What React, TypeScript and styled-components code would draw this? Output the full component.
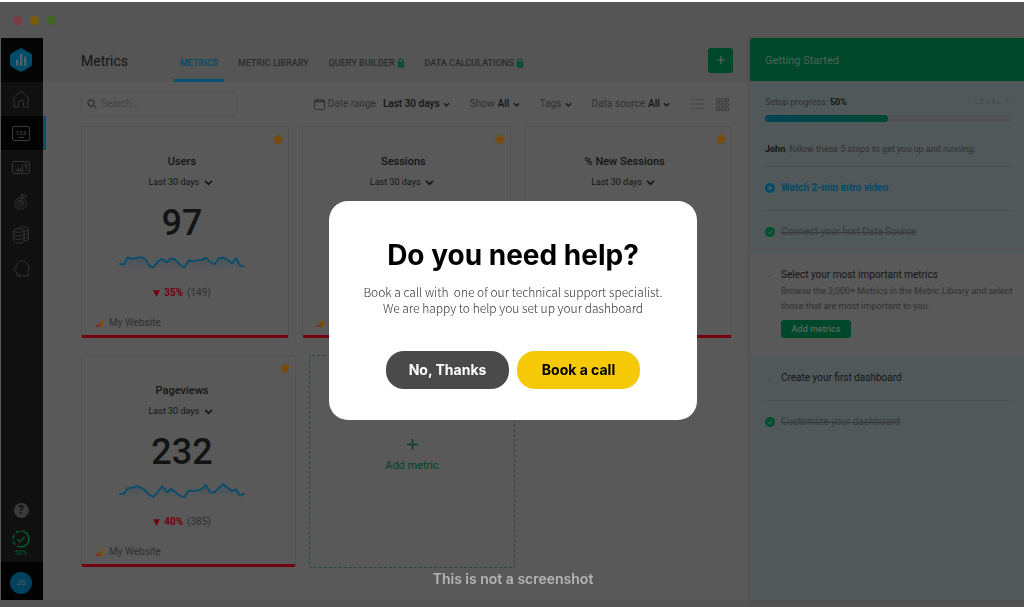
import React from "react";
import styled, { createGlobalStyle, css } from "styled-components";

const c = {
  page: "#595959",
  chrome: "#555555",
  ink: "#141414",
  muted: "#303030",
  faint: "#434343",
  line: "#525252",
  green: "#00482b",
  blue: "#004a6a",
  red: "#74000f",
  amber: "#7a4a00",
  panel: "#51585a",
};

const Global = createGlobalStyle`
  *, *::before, *::after { box-sizing: border-box; }
  html { background: ${c.page}; }
  body { margin: 0; font-family: Roboto, "Liberation Sans", sans-serif; color: ${c.ink}; font-size: 10px; line-height: 14px; }
  button, input, select { font: inherit; color: inherit; margin: 0; padding: 0; border: 0; background: none; }
  button { cursor: pointer; }
  a { color: inherit; text-decoration: none; }
  h1, h2, h3, p, ul, ol { margin: 0; padding: 0; }
  ul, ol { list-style: none; }
  svg { display: block; flex: none; }
`;

const Page = styled.div`
  min-height: 100vh;
  display: flex;
  flex-direction: column;
  border-top: 2px solid #ffffff;
  border-bottom: 7px solid #535353;
`;

const WindowBar = styled.header`
  display: flex;
  align-items: center;
  gap: 8px;
  height: 36px;
  padding-left: 13px;
  background: ${c.chrome};
`;

const Dot = styled.span<{ $color: string }>`
  width: 9px;
  height: 9px;
  border-radius: 50%;
  background: ${(p) => p.$color};
`;

const Shell = styled.div`
  flex: 1;
  display: flex;
  padding-left: 1px;
`;

const Sidebar = styled.nav`
  width: 42px;
  flex: none;
  display: flex;
  flex-direction: column;
  background: #101010;
  color: #343434;
`;

const Logo = styled.a`
  height: 44px;
  padding-right: 2px;
  display: grid;
  place-items: center;
  background: #050505;
`;

const NavLink = styled.a<{ $active?: boolean }>`
  position: relative;
  height: 34px;
  padding-right: 2px;
  display: grid;
  place-items: center;
  ${(p) =>
    p.$active &&
    css`
      background: #030303;
      &::after {
        content: "";
        position: absolute;
        right: -3px;
        top: 0;
        width: 3px;
        height: 100%;
        background: #005272;
      }
    `}
`;

const SideFoot = styled.div`
  margin-top: auto;
  display: flex;
  flex-direction: column;
`;

const SideTools = styled.div`
  display: flex;
  flex-direction: column;
  align-items: center;
  gap: 12px;
  padding: 0 2px 4px 0;
`;

const HelpButton = styled.button`
  width: 15px;
  height: 15px;
  border-radius: 50%;
  background: #3a3a3d;
  color: #101010;
  font-size: 12px;
  font-weight: 700;
  line-height: 15px;
`;

const Setup = styled.a`
  display: flex;
  flex-direction: column;
  align-items: center;
  color: #005734;
  font-size: 7px;
  line-height: 10px;
`;

const Account = styled.div`
  height: 38px;
  padding: 4px 2px 0 0;
  display: grid;
  place-items: center;
  background: #020202;
`;

const Avatar = styled.button`
  width: 22px;
  height: 22px;
  border-radius: 50%;
  background: #00415d;
  color: #4c5c66;
  font-size: 8px;
  font-weight: 500;
`;

const Main = styled.main`
  flex: 1;
  min-width: 0;
  display: flex;
  flex-direction: column;
`;

const MainHeader = styled.div`
  height: 44px;
  display: flex;
  align-items: center;
  padding: 0 17px 0 38px;
  background: ${c.chrome};
`;

const Title = styled.h1`
  width: 93px;
  font-size: 14px;
  line-height: 18px;
  font-weight: 400;
  padding-top: 2px;
`;

const Tabs = styled.div`
  align-self: stretch;
  flex: 1;
  display: flex;
  gap: 8px;
`;

const Tab = styled.a<{ $active?: boolean }>`
  display: flex;
  align-items: center;
  gap: 2px;
  padding: 9px 6px 0;
  border-bottom: 3px solid ${(p) => (p.$active ? "#005272" : "transparent")};
  color: ${(p) => (p.$active ? c.blue : "#2b2b2b")};
  font-size: 9px;
  font-weight: 500;
  white-space: nowrap;
`;

const AddButton = styled.button`
  width: 25px;
  height: 25px;
  display: grid;
  place-items: center;
  border-radius: 3px;
  background: ${c.green};
  color: #5b6b64;
`;

const Toolbar = styled.div`
  display: flex;
  align-items: center;
  gap: 20px;
  padding: 9px 21px 9px 38px;
`;

const Search = styled.label`
  width: 156px;
  height: 26px;
  margin-right: auto;
  display: flex;
  align-items: center;
  gap: 4px;
  padding: 0 5px;
  border: 1px solid ${c.line};
  border-radius: 3px;
  color: #363636;
  input {
    min-width: 0;
    flex: 1;
    outline: 0;
    &::placeholder { color: ${c.faint}; opacity: 1; }
  }
`;

const Filter = styled.label`
  display: flex;
  align-items: center;
  gap: 3px;
  color: ${c.muted};
  white-space: nowrap;
`;

const Picker = styled.select<{ $tone?: "muted"; $gap?: number }>`
  appearance: none;
  margin-left: ${(p) => p.$gap ?? 0}px;
  color: ${(p) => (p.$tone === "muted" ? c.muted : c.ink)};
  font-weight: ${(p) => (p.$tone === "muted" ? 400 : 500)};
`;

const Views = styled.div`
  display: flex;
  align-items: center;
  gap: 12px;
  color: #3b3b3b;
`;

const Board = styled.div`
  padding: 0 18px 32px 38px;
  display: flex;
  flex-direction: column;
  gap: 17px;
`;

const Row = styled.div<{ $columns: string }>`
  display: grid;
  grid-template-columns: ${(p) => p.$columns};
  gap: 13px;
`;

const CardBox = styled.article`
  position: relative;
  display: flex;
  flex-direction: column;
  height: 212px;
  padding-top: 28px;
  border: 1px solid ${c.line};
  border-bottom: 3px solid ${c.red};
  border-radius: 3px;
`;

const Star = styled.button`
  position: absolute;
  top: 6px;
  right: 4px;
  color: ${c.amber};
`;

const CardBody = styled.div`
  width: 100%;
  max-width: 200px;
  display: flex;
  flex-direction: column;
  align-items: center;
`;

const CardTitle = styled.h2`
  font-size: 11px;
  line-height: 14px;
  font-weight: 500;
`;

const Period = styled.label`
  margin-top: 6px;
  display: flex;
  align-items: center;
  gap: 4px;
  font-size: 9px;
  padding-right: 3px;
  select { font-weight: 400; }
`;

const Big = styled.p`
  margin: 14px 0 11px;
  font-size: 36px;
  line-height: 40px;
  font-weight: 500;
`;

const Delta = styled.p`
  margin-top: 16px;
  display: flex;
  align-items: center;
  gap: 4px;
  color: ${c.red};
  font-weight: 700;
  span { color: ${c.muted}; font-weight: 400; }
`;

const Source = styled.p`
  margin-top: auto;
  padding: 0 0 5px 14px;
  min-height: 19px;
  display: flex;
  align-items: center;
  gap: 6px;
  color: ${c.muted};
`;

const AddCard = styled.button`
  height: 213px;
  display: flex;
  flex-direction: column;
  align-items: center;
  justify-content: center;
  gap: 8px;
  padding-bottom: 13px;
  border: 1px dashed #27493a;
  border-radius: 3px;
  color: #004529;
  font-size: 11px;
`;

const Panel = styled.aside`
  width: 274px;
  flex: none;
  background: ${c.panel};
  color: ${c.muted};
  box-shadow: -1px 0 4px rgba(0, 0, 0, 0.12);
  border-top-left-radius: 2px;
`;

const PanelHead = styled.h2`
  height: 43px;
  padding: 3px 15px 0;
  display: flex;
  align-items: center;
  background: ${c.green};
  color: #4d6359;
  font-size: 11px;
  font-weight: 400;
  border-top-left-radius: 2px;
`;

const Progress = styled.div`
  padding: 14px 13px 10px 15px;
  font-size: 9px;
  p { display: flex; justify-content: space-between; }
  b { color: ${c.ink}; }
`;

const Level = styled.span`
  color: #43494a;
  font-size: 8px;
  letter-spacing: 1px;
`;

const Track = styled.div`
  height: 7px;
  margin: 6px 0 20px;
  border-radius: 4px;
  background: #4f5254;
`;

const Fill = styled.div`
  height: 100%;
  border-radius: 4px;
  background: linear-gradient(90deg, #004355, #004832);
`;

const Step = styled.li<{ $open?: boolean }>`
  display: flex;
  gap: 6px;
  margin: 0 13px 0 15px;
  padding: 14px 0 15px;
  border-top: 1px solid #4b5052;
  ${(p) =>
    p.$open &&
    css`
      margin: 0;
      padding: 13px 8px 18px 15px;
      background: ${c.page};
      border-top-color: ${c.page};
      & + li { border-top-color: transparent; }
    `}
`;

const Mark = styled.span`
  width: 10px;
  height: 14px;
  flex: none;
  display: grid;
  place-items: center;
`;

const StepName = styled.h3<{ $state: "link" | "done" | "todo" }>`
  font-size: 10px;
  line-height: 14px;
  font-weight: ${(p) => (p.$state === "link" ? 700 : 400)};
  color: ${(p) => ({ link: c.blue, done: "#363a3b", todo: "#131516" }[p.$state])};
  text-decoration: ${(p) => (p.$state === "done" ? "line-through" : "none")};
`;

const StepText = styled.p`
  margin: 2px 0 6px;
  font-size: 9px;
  line-height: 15px;
`;

const SmallButton = styled.button`
  display: block;
  width: 70px;
  height: 18px;
  border-radius: 3px;
  background: ${c.green};
  color: #57685f;
  font-size: 9px;
  font-weight: 500;
`;

const Overlay = styled.div`
  position: fixed;
  inset: 0;
  display: grid;
  grid-template-rows: 1fr auto 1fr;
  justify-items: center;
  padding: 13px 0 0 2px;
`;

const Dialog = styled.section`
  grid-row: 2;
  width: 368px;
  max-width: 90vw;
  padding: 38px 20px 31px;
  border-radius: 19px;
  background: #ffffff;
  text-align: center;
`;

const DialogTitle = styled.h2`
  color: #000000;
  font-family: Inter, "Open Sans", sans-serif;
  font-size: 28px;
  line-height: 32px;
  font-weight: 700;
`;

const DialogText = styled.p`
  margin: 13px 0 35px;
  color: #333333;
  font-family: "Noto Sans CJK SC", "Noto Sans", sans-serif;
  font-size: 12px;
  line-height: 16px;
  font-weight: 300;
  white-space: pre-wrap;
`;

const Actions = styled.div`
  display: flex;
  justify-content: center;
  gap: 8px;
`;

const Pill = styled.button<{ $primary?: boolean }>`
  width: 123px;
  height: 38px;
  border-radius: 18px;
  background: ${(p) => (p.$primary ? "#f5c907" : "#4a4a4a")};
  color: ${(p) => (p.$primary ? "#000000" : "#ffffff")};
  font-family: Inter, "Open Sans", sans-serif;
  font-size: 14px;
  font-weight: 700;
`;

const Caption = styled.p`
  grid-row: 3;
  align-self: end;
  padding-bottom: 19px;
  color: #b5b5b5;
  font-family: Inter, "Open Sans", sans-serif;
  font-size: 14px;
  line-height: 18px;
  font-weight: 600;
`;

const Chevron = ({ size = 7 }: { size?: number }) => (
  <svg width={size} height={size} viewBox="0 0 8 8" fill="none" stroke={c.ink} strokeWidth="1.5">
    <path d="M1 2.6l3 3 3-3" />
  </svg>
);

const Lock = () => (
  <svg width="8" height="10" viewBox="0 0 8 10">
    <path d="M2 4V2.8a2 2 0 0 1 4 0V4" fill="none" stroke="#005031" strokeWidth="1.2" />
    <rect x="0.8" y="3.8" width="6.4" height="5.6" rx="1" fill="#005031" />
    <circle cx="4" cy="6.5" r="0.8" fill="#35574a" />
  </svg>
);

const Plus = ({ size, width = 1.4 }: { size: number; width?: number }) => (
  <svg width={size} height={size} viewBox="0 0 12 12" stroke="currentColor" strokeWidth={width}>
    <path d="M6 1v10M1 6h10" />
  </svg>
);

const DoneMark = () => (
  <svg width="10" height="10" viewBox="0 0 10 10" fill="none">
    <circle cx="5" cy="5" r="5" fill="#004f30" />
    <path d="M2.8 5.2l1.6 1.6 3-3.4" stroke="#52665d" />
  </svg>
);

const TodoMark = () => (
  <svg width="10" height="10" viewBox="0 0 10 10" fill="none" stroke="#474b4a">
    <path d="M3 5.4l1.6 1.6 3-3.8" />
  </svg>
);

const PlayMark = () => (
  <svg width="10" height="10" viewBox="0 0 10 10">
    <circle cx="5" cy="5" r="5" fill={c.blue} />
    <path d="M3.6 2.4v5.200L7.800 5z" fill={c.panel} />
  </svg>
);

const navIcons: { name: string; active?: boolean; icon: React.ReactNode }[] = [
  {
    name: "Home",
    icon: (
      <svg width="16" height="18" viewBox="0 0 16 18" fill="none" stroke="currentColor">
        <path d="M1 7.5L8 1l7 6.500V17h-4.500v-4.500a2.500 2.500 0 0 0-5 0V17H1z" strokeLinejoin="round" />
      </svg>
    ),
  },
  {
    name: "Metrics",
    active: true,
    icon: (
      <svg width="18" height="15" viewBox="0 0 18 15" fill="none" stroke="#3c3c3c">
        <rect x="0.5" y="0.5" width="17" height="14" rx="1.5" />
        <path d="M6 11.500h6" />
        <text x="9" y="8.500" textAnchor="middle" fontSize="6" fontWeight="700" fill="#3c3c3c" stroke="none">123</text>
      </svg>
    ),
  },
  {
    name: "Dashboards",
    icon: (
      <svg width="18" height="13" viewBox="0 0 18 13" fill="none" stroke="currentColor">
        <rect x="0.5" y="0.5" width="17" height="12" rx="1.500" />
        <path d="M4.500 10V8M6.500 10V6.500M8.500 10V7M10.500 10V3M3.500 10h8M13 7h2.500M13 9.500h2.500" />
        <circle cx="14" cy="4" r="1.500" />
      </svg>
    ),
  },
  {
    name: "Goals",
    icon: (
      <svg width="14" height="17" viewBox="0 0 14 17" fill="none" stroke="currentColor">
        <circle cx="6.500" cy="10.500" r="5.800" />
        <circle cx="6.500" cy="10.500" r="3.300" />
        <circle cx="6.500" cy="10.500" r="1" />
        <path d="M6.500 10.500L8.500 3M8 3.500L7 1l3 1 3 0.500-2 2z" strokeLinejoin="round" />
      </svg>
    ),
  },
  {
    name: "Data sources",
    icon: (
      <svg width="16" height="18" viewBox="0 0 16 18" fill="none" stroke="currentColor">
        <ellipse cx="5.800" cy="4.500" rx="5.200" ry="1.800" />
        <path d="M0.600 4.500v10.700c0 2.400 10.400 2.400 10.400 0V4.500M0.600 8c0 2.400 10.400 2.400 10.400 0M0.600 11.600c0 2.400 10.400 2.400 10.400 0" />
        <path d="M5.500 2.400c1-2.200 10-2.200 10 0v10.700c0 1.200-2 1.800-4.500 1.900M11 5.100c2.500-.1 4.500-.8 4.500-1.800M11 8.500c2.500-.1 4.500-.8 4.500-1.800M11 12c2.500-.1 4.500-.8 4.500-1.800" />
      </svg>
    ),
  },
  {
    name: "Notifications",
    icon: (
      <svg width="17" height="18" viewBox="0 0 17 18" fill="none" stroke="currentColor" strokeLinejoin="round">
        <path d="M0.800 9.500C3 8 3.200 6.500 4 4.500 5.300 1.500 8.500.2 11.500 1.300c3.200 1.300 4.600 4 4.300 7-.2 2.500-1.300 4.500-.3 7.400-3.500-.4-5.500 1-8.500-.2C4.500 14.500 3 11.500 0.800 9.500z" />
        <path d="M3.800 13.500c-.9 1.500.1 3.400 1.700 3.400 1 0 1.600-.5 2-1.300" />
      </svg>
    ),
  },
];

const userTrend =
  "358,251 372,254 384,232 397,237 423,231 436,236 450,259 462,262 475,243 488,237 502,247 514,235 527,239 540,253 554,263 567,241 580,244 593,240 606,240 618,233 631,245 644,254 657,234 670,233 683,238 697,250 709,234 722,258 735,258";
const viewTrend =
  "358,255 372,254 385,237 398,237 411,231 424,236 437,245 450,258 462,264 475,248 488,232 502,250 514,240 527,249 540,260 554,265 567,244 580,246 593,244 606,240 618,228 631,249 644,250 657,237 670,225 683,235 697,247 709,241 722,260 735,253";

const Sparkline = ({ points }: { points: string }) => (
  <svg width="128" height="16" viewBox="355 222 384 48" fill="none">
    <defs>
      <linearGradient id="fade" x1="0" x2="0" y1="0" y2="1">
        <stop offset="0" stopColor="#45535b" />
        <stop offset="1" stopColor="#595959" />
      </linearGradient>
    </defs>
    <path d={`M358,268 L${points} L735,268z`} fill="url(#fade)" />
    <polyline points={points} stroke="#004c6e" strokeWidth="5" strokeLinejoin="round" />
  </svg>
);

type Reading = { value: string; trend: string; change: string; before: string };
type Metric = { title: string; reading?: Reading; source?: string };

const Card = ({ title, reading, source }: Metric) => (
  <CardBox>
    <Star aria-label={`Favourite ${title}`}>
      <svg width="12" height="12" viewBox="0 0 12 12" fill="currentColor">
        <path d="M6 0.300l1.700 3.900 4.100.4-3.100 2.800.9 4.200L6 9.400l-3.600 2.200.9-4.200L.2 4.600l4.100-.4z" />
      </svg>
    </Star>
    <CardBody>
      <CardTitle>{title}</CardTitle>
      <Period>
        <Picker aria-label={`${title} period`}>
          <option>Last 30 days</option>
        </Picker>
        <Chevron size={9} />
      </Period>
      {reading && (
        <>
          <Big>{reading.value}</Big>
          <Sparkline points={reading.trend} />
          <Delta>
            <svg width="7" height="7" viewBox="0 0 7 7" fill="currentColor">
              <path d="M0 0.300h7L3.500 7z" />
            </svg>
            {reading.change} <span>({reading.before})</span>
          </Delta>
        </>
      )}
    </CardBody>
    <Source>
      <svg width="7" height="8" viewBox="0 0 7 8">
        <path d="M0 6h2v2H0z" fill="#74310b" />
        <path d="M2.500 4h2v4h-2z" fill="#7a3d08" />
        <path d="M5 0.500h2V8H5z" fill="#7e5200" />
      </svg>
      {source}
    </Source>
  </CardBox>
);

const topMetrics: Metric[] = [
  {
    title: "Users",
    reading: { value: "97", trend: userTrend, change: "35%", before: "149" },
    source: "My Website",
  },
  { title: "Sessions" },
  { title: "% New Sessions" },
];

const pageviews: Metric = {
  title: "Pageviews",
  reading: { value: "232", trend: viewTrend, change: "40%", before: "385" },
  source: "My Website",
};

export default function App() {
  return (
    <>
      <Global />
      <Page>
        <WindowBar>
          <Dot $color="#7c3a42" />
          <Dot $color="#7a5c0a" />
          <Dot $color="#41661f" />
        </WindowBar>
        <Shell>
          <Sidebar>
            <Logo href="#" aria-label="Start">
              <svg width="22" height="24" viewBox="0 0 22 24">
                <path d="M9.500.700a3 3 0 0 1 3 0l8 4.500A3 3 0 0 1 22 7.700v8.600a3 3 0 0 1-1.500 2.500l-8 4.500a3 3 0 0 1-3 0l-8-4.500A3 3 0 0 1 0 16.300V7.700a3 3 0 0 1 1.500-2.500z" fill="#004d6b" />
                <path d="M7.200 16.800v-4.300M11.200 16.800V6.800M15.200 16.800V9.800" stroke="#50606a" strokeWidth="2.400" strokeLinecap="round" />
              </svg>
            </Logo>
            {navIcons.map((n) => (
              <NavLink key={n.name} href="#" aria-label={n.name} $active={n.active}>
                {n.icon}
              </NavLink>
            ))}
            <SideFoot>
              <SideTools>
                <HelpButton>?</HelpButton>
                <Setup href="#">
                  <svg width="18" height="18" viewBox="0 0 18 18" fill="none" stroke="currentColor" strokeWidth="1.600">
                    <path d="M9 1a8 8 0 0 1 0 16" />
                    <path d="M9 17A8 8 0 0 1 9 1" strokeDasharray="4 2.500" />
                    <path d="M5.500 9.200l2.500 2.500 4.500-4.700" />
                  </svg>
                  50%
                </Setup>
              </SideTools>
              <Account>
                <Avatar>JS</Avatar>
              </Account>
            </SideFoot>
          </Sidebar>

          <Main>
            <MainHeader>
              <Title>Metrics</Title>
              <Tabs>
                <Tab href="#" $active>METRICS</Tab>
                <Tab href="#">METRIC LIBRARY</Tab>
                <Tab href="#">QUERY BUILDER <Lock /></Tab>
                <Tab href="#">DATA CALCULATIONS <Lock /></Tab>
              </Tabs>
              <AddButton aria-label="Add"><Plus size={10} /></AddButton>
            </MainHeader>
            <Toolbar>
              <Search>
                <svg width="10" height="10" viewBox="0 0 10 10" fill="none" stroke="currentColor" strokeWidth="1.400">
                  <circle cx="4" cy="4" r="3" />
                  <path d="M6.200 6.200L9.300 9.300" />
                </svg>
                <input type="text" placeholder="Search..." aria-label="Search" />
              </Search>
              <Filter>
                <svg width="11" height="11" viewBox="0 0 11 11" fill="none" stroke="currentColor">
                  <rect x="0.500" y="1" width="10" height="9.500" rx="1" />
                  <path d="M0.500 2.500h10M3 0v1.500M8 0v1.500" strokeWidth="1.500" />
                </svg>
                Date range
                <Picker $gap={4}><option>Last 30 days</option></Picker>
                <Chevron />
              </Filter>
              <Filter>
                Show
                <Picker><option>All</option></Picker>
                <Chevron />
              </Filter>
              <Filter>
                <Picker $tone="muted" aria-label="Tags"><option>Tags</option></Picker>
                <Chevron />
              </Filter>
              <Filter>
                Data source
                <Picker><option>All</option></Picker>
                <Chevron />
              </Filter>
              <Views>
                <button aria-label="List view">
                  <svg width="14" height="12" viewBox="0 0 14 12" stroke="#474747">
                    <path d="M0 1.500h14M0 6h14M0 10.500h14" />
                  </svg>
                </button>
                <button aria-label="Grid view">
                  <svg width="13" height="13" viewBox="0 0 13 13" fill="none" stroke="currentColor">
                    {[0, 1, 2].map((y) =>
                      [0, 1, 2].map((x) => (
                        <rect key={`${x}${y}`} x={0.5 + x * 4.5} y={0.5 + y * 4.5} width="3" height="3" rx="0.500" />
                      )),
                    )}
                  </svg>
                </button>
              </Views>
            </Toolbar>
            <Board>
              <Row $columns="repeat(3, 1fr)">
                {topMetrics.map((m) => (
                  <Card key={m.title} {...m} />
                ))}
              </Row>
              <Row $columns="215fr 206fr 204fr">
                <Card {...pageviews} />
                <AddCard>
                  <Plus size={13} />
                  Add metric
                </AddCard>
              </Row>
            </Board>
          </Main>

          <Panel>
            <PanelHead>Getting Started</PanelHead>
            <Progress>
              <p>
                <span>Setup progress: <b>50%</b></span>
                <Level>LEVEL 1</Level>
              </p>
              <Track><Fill style={{ width: "50%" }} /></Track>
              <p>
                <span><b>John</b>, follow these 5 steps to get you up and running:</span>
              </p>
            </Progress>
            <ol>
              <Step>
                <Mark><PlayMark /></Mark>
                <StepName $state="link"><a href="#">Watch 2-min intro video</a></StepName>
              </Step>
              <Step>
                <Mark><DoneMark /></Mark>
                <StepName $state="done">Connect your first Data Source</StepName>
              </Step>
              <Step $open>
                <Mark><TodoMark /></Mark>
                <div>
                  <StepName $state="todo">Select your most important metrics</StepName>
                  <StepText>
                    Browse the 3,000+ Metrics in the Metric Library and select those that are most important to you.
                  </StepText>
                  <SmallButton>Add metrics</SmallButton>
                </div>
              </Step>
              <Step>
                <Mark><TodoMark /></Mark>
                <StepName $state="todo">Create your first dashboard</StepName>
              </Step>
              <Step>
                <Mark><DoneMark /></Mark>
                <StepName $state="done">Customize your dashboard</StepName>
              </Step>
            </ol>
          </Panel>
        </Shell>
      </Page>

      <Overlay>
        <Dialog role="dialog" aria-modal="true" aria-labelledby="help-title">
          <DialogTitle id="help-title">Do you need help?</DialogTitle>
          <DialogText>
            {"Book a call with  one of our technical support specialist.\nWe are happy to help you set up your dashboard"}
          </DialogText>
          <Actions>
            <Pill>No, Thanks</Pill>
            <Pill $primary>Book a call</Pill>
          </Actions>
        </Dialog>
        <Caption>This is not a screenshot</Caption>
      </Overlay>
    </>
  );
}
